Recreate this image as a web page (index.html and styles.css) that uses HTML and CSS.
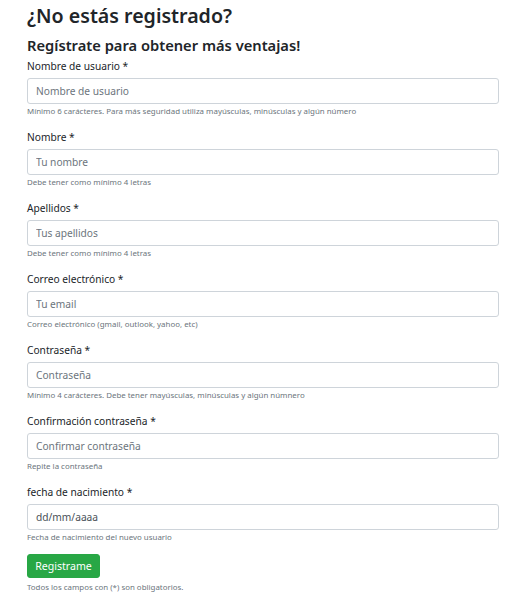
FILE: index.html
```html
<!DOCTYPE html>
<html lang="es">
<head>
<meta charset="utf-8">
<link rel="stylesheet" href="styles.css">
</head>
<body>
<div class="wrap">
  <h2 class="title">¿No estás registrado?</h2>
  <h4 class="subtitle">Regístrate para obtener más ventajas!</h4>
  <form class="form">
    <div class="group">
      <label class="label">Nombre de usuario *</label>
      <input class="input" type="text" placeholder="Nombre de usuario">
      <small class="help">Mínimo 6 carácteres. Para más seguridad utiliza mayúsculas, minúsculas y algún número</small>
    </div>
    <div class="group">
      <label class="label">Nombre *</label>
      <input class="input" type="text" placeholder="Tu nombre">
      <small class="help">Debe tener como mínimo 4 letras</small>
    </div>
    <div class="group">
      <label class="label">Apellidos *</label>
      <input class="input" type="text" placeholder="Tus apellidos">
      <small class="help">Debe tener como mínimo 4 letras</small>
    </div>
    <div class="group">
      <label class="label">Correo electrónico *</label>
      <input class="input" type="text" placeholder="Tu email">
      <small class="help">Correo electrónico (gmail, outlook, yahoo, etc)</small>
    </div>
    <div class="group">
      <label class="label">Contraseña *</label>
      <input class="input" type="text" placeholder="Contraseña">
      <small class="help">Mínimo 4 carácteres. Debe tener mayúsculas, minúsculas y algún númnero</small>
    </div>
    <div class="group">
      <label class="label">Confirmación contraseña *</label>
      <input class="input" type="text" placeholder="Confirmar contraseña">
      <small class="help">Repite la contraseña</small>
    </div>
    <div class="group">
      <label class="label">fecha de nacimiento *</label>
      <div class="input date">dd/mm/aaaa</div>
      <small class="help">Fecha de nacimiento del nuevo usuario</small>
    </div>
    <button class="btn" type="button">Registrame</button>
    <small class="help foot">Todos los campos con (*) son obligatorios.</small>
  </form>
</div>
</body>
</html>
```
FILE: styles.css
```css
* { box-sizing: border-box; }
html, body { margin: 0; padding: 0; background: #fff; }
body {
  font-family: "Noto Sans", "Open Sans", sans-serif;
  color: #212529;
  font-size: 10.2px;
}
.wrap { padding: 0 20px 0 27px; }
.title {
  margin: 0;
  padding-top: 2px;
  font-size: 19.6px;
  font-weight: 600;
  line-height: 28px;
}
.subtitle {
  margin: 4px 0 0;
  font-size: 14.7px;
  font-weight: 600;
  line-height: 22px;
}
.form { display: flex; flex-direction: column; margin-top: 1px; }
.group { display: flex; flex-direction: column; margin-bottom: 11px; }
.label { line-height: 18px; margin-bottom: 3px; }
.input {
  display: block;
  width: 100%;
  height: 26px;
  border: 1px solid #ced4da;
  border-radius: 3px;
  padding: 0 8px;
  font-family: inherit;
  font-size: 10.2px;
  color: #495057;
  background: #fff;
  outline: none;
}
.input::placeholder { color: #6c757d; }
.date { display: flex; align-items: center; color: #495057; }
.help {
  margin-top: 1px;
  line-height: 12px;
  font-size: 7.9px;
  color: #6c757d;
}
.btn {
  align-self: flex-start;
  height: 24px;
  width: 73px;
  margin-top: 0;
  border: 1px solid #28a745;
  background: #28a745;
  color: #fff;
  border-radius: 3px;
  font-family: inherit;
  font-size: 10.6px;
  padding: 0;
}
.foot { margin-top: 3px; }
```
